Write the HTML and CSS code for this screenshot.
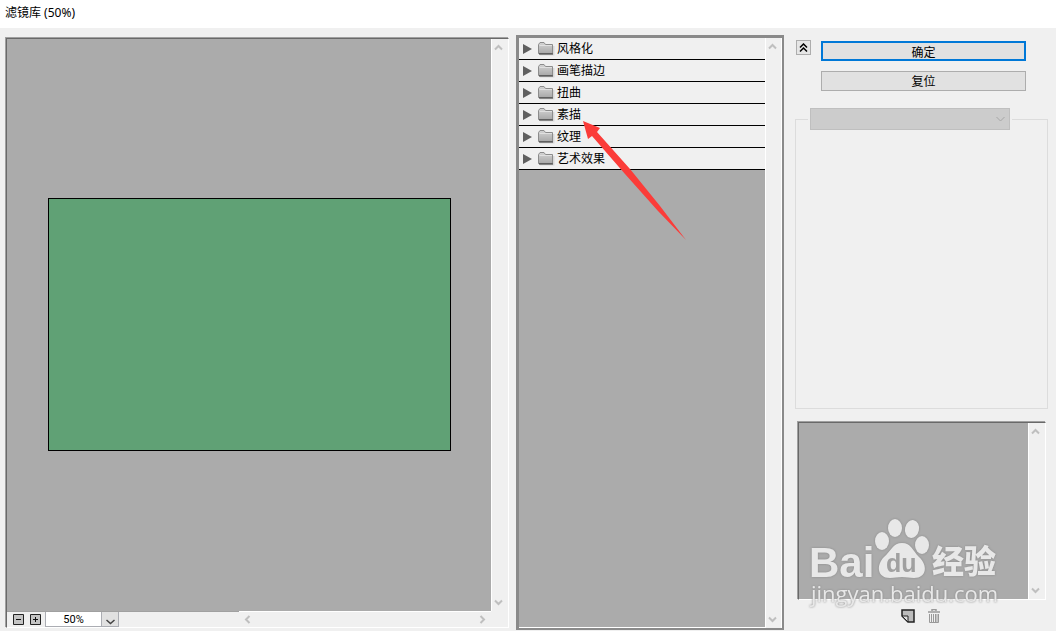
FILE: index.html
```html
<!doctype html>
<html lang="zh-CN">
 <head>
  <meta charset="utf-8">
  <title>滤镜库 (50%)</title>
  <link rel="stylesheet" href="styles.css">
 </head>

 <body>
  <!-- shared scroll arrows and folder -->
  <svg class="defs">
	<symbol id="up" viewBox="0 0 9 7"><path d="M1 5.5 4.5 2 8 5.5" fill="none" stroke="#bfbfbf" stroke-width="2"/></symbol>
	<symbol id="down" viewBox="0 0 9 7"><path d="M1 1.5 4.5 5 8 1.5" fill="none" stroke="#bfbfbf" stroke-width="2"/></symbol>
	<symbol id="left" viewBox="0 0 7 9"><path d="M5.5 1 2 4.5 5.5 8" fill="none" stroke="#bfbfbf" stroke-width="2"/></symbol>
	<symbol id="right" viewBox="0 0 7 9"><path d="M1.5 1 5 4.5 1.5 8" fill="none" stroke="#bfbfbf" stroke-width="2"/></symbol>
	<symbol id="folder" viewBox="0 0 17 14">
	  <path d="M2 12.5h13.5V4" fill="none" stroke="#d8d8d8" stroke-width="2"/>
	  <path d="M.5 11.5v-9l1.5-2h4l1.5 2h7v9z" fill="url(#metal)" stroke="#8c8c8c"/>
	  <path d="M1.500 3.500h12.500" stroke="#e0e0e0"/>
	  <path d="M1 12h14" stroke="#333"/>
	</symbol>
	<linearGradient id="metal" x1="0" y1="0" x2="0" y2="1"><stop offset="0" stop-color="#d4d4d4"/><stop offset="1" stop-color="#a8a8a8"/></linearGradient>
  </svg>

  <header class="title">滤镜库 (50%)</header>

  <main class="gallery">
	<section class="preview">
	  <div class="canvas"><div class="picture"></div></div>
	  <div class="vscroll"><svg class="v"><use href="#up"/></svg><svg class="v"><use href="#down"/></svg></div>
	  <div class="zoombar">
		<button class="zoom" aria-label="缩小"><svg viewBox="0 0 11 11"><path d="M.5.5h10v10H.5z" fill="#c4c4c4" stroke="#222"/><path d="M3 5.5h5" stroke="#111"/></svg></button>
		<button class="zoom" aria-label="放大"><svg viewBox="0 0 11 11"><path d="M.5.5h10v10H.5z" fill="#c4c4c4" stroke="#222"/><path d="M3 5.5h5M5.5 3v5" stroke="#111"/></svg></button>
		<input class="level" type="text" value="50%" aria-label="缩放比例">
		<button class="drop" aria-label="选择比例"><svg viewBox="0 0 9 6"><path d="M.5 1 4.5 4.5 8.5 1" fill="none" stroke="#444" stroke-width="1.5"/></svg></button>
	  </div>
	  <div class="hscroll"><svg class="h"><use href="#left"/></svg><svg class="h"><use href="#right"/></svg></div>
	</section>

	<section class="filters">
	  <div class="list">
		<button class="group"><span class="tri"></span><svg class="folder"><use href="#folder"/></svg>风格化</button>
		<button class="group"><span class="tri"></span><svg class="folder"><use href="#folder"/></svg>画笔描边</button>
		<button class="group"><span class="tri"></span><svg class="folder"><use href="#folder"/></svg>扭曲</button>
		<button class="group"><span class="tri"></span><svg class="folder"><use href="#folder"/></svg>素描</button>
		<button class="group"><span class="tri"></span><svg class="folder"><use href="#folder"/></svg>纹理</button>
		<button class="group"><span class="tri"></span><svg class="folder"><use href="#folder"/></svg>艺术效果</button>
	  </div>
	  <div class="vscroll"><svg class="v"><use href="#up"/></svg><svg class="v"><use href="#down"/></svg></div>
	  <svg class="pointer" viewBox="0 0 104 120"><path d="M0 0 17 7 14 11 47 48 77 85 103 119 75 90 42 53 9 15 5 18z" fill="#fb3c39"/></svg>
	</section>

	<section class="side">
	  <div class="actions">
		<button class="collapse" aria-label="折叠"><svg viewBox="0 0 9 9"><path d="M1 4.5 4.5 1 8 4.5M1 8.5 4.5 5 8 8.5" fill="none" stroke="#000" stroke-width="1.5"/></svg></button>
		<div class="buttons">
		  <button class="btn ok">确定</button>
		  <button class="btn">复位</button>
		</div>
	  </div>

	  <fieldset class="options">
		<legend><span class="combo"><select disabled aria-label="滤镜"></select><svg viewBox="0 0 9 6"><path d="M.5 1 4.5 5 8.5 1" fill="none" stroke="#a6a6a6"/></svg></span></legend>
	  </fieldset>

	  <div class="layers">
		<div class="stack"></div>
		<div class="vscroll"><svg class="v"><use href="#up"/></svg><svg class="v"><use href="#down"/></svg></div>
		<svg class="mark" viewBox="0 0 210 104">
		  <g fill="#e8e8e8">
			<text class="bai" x="9" y="67">Bai</text>
			<ellipse cx="82" cy="31" rx="7" ry="9"/>
			<ellipse cx="95" cy="18" rx="7" ry="9"/>
			<ellipse cx="112" cy="19" rx="7" ry="9" transform="rotate(12 112 19)"/>
			<ellipse cx="122" cy="35" rx="7" ry="9"/>
			<path d="M102 33c9 0 11 8 17 14 9 8 8 21-5 21-5 0-7-1-12-1s-7 1-12 1c-13 0-14-13-6-21 7-6 9-14 18-14z"/>
			<text class="jy" x="132" y="63">经验</text>
			<text class="url" x="11" y="92">jingyan.baidu.com</text>
		  </g>
		  <text class="du" x="86" y="62">du</text>
		</svg>
	  </div>

	  <div class="tools">
		<button class="tool" aria-label="新建效果图层"><svg width="14" height="14" viewBox="0 0 14 14"><path d="M1 1h12v12H7L1 7z" fill="#bcbcbc" stroke="#222" stroke-width="1.5"/><path d="M1 7h6v6z" fill="#e0e0e0" stroke="#222"/></svg></button>
		<button class="tool" aria-label="删除效果图层"><svg width="12" height="14" viewBox="0 0 12 14"><path d="M0 3h12M4 2V.5h4V2" fill="none" stroke="#999" stroke-width="1.5"/><path d="M1.5 5v8.5h9V5M3.5 5v8M5.5 5v8M7.5 5v8M9 5v8" fill="none" stroke="#999"/></svg></button>
	  </div>
	</section>
  </main>
 </body>
</html>
```
FILE: styles.css
```css
* { box-sizing: border-box; }
body { margin: 0; height: 100vh; display: flex; flex-direction: column; background: #f0f0f0; color: #000; font: 12px/18px "Noto Sans", "Noto Sans CJK SC", sans-serif; }
button, input, select { font: inherit; color: inherit; margin: 0; padding: 0; border: 0; border-radius: 0; background: none; }
svg { display: block; flex: none; }
.defs { width: 0; height: 0; position: absolute; }

.title { background: #fff; height: 28px; padding: 4px 5px; }
.gallery { flex: 1; min-height: 0; display: grid; grid-template-columns: minmax(0, 1fr) 268px 264px; padding: 7px 8px 1px 5px; }

/* sunken panels */
.preview, .layers { border: 1px solid; border-color: #696969 #fff #fff #696969; box-shadow: -1px -1px #a0a0a0; }
.vscroll { width: 17px; border-left: 1px solid #fff; background: #f0f0f0; display: flex; flex-direction: column; align-items: center; justify-content: space-between; padding: 5px 3px 5px 0; }
.v { width: 9px; height: 7px; }
.h { width: 7px; height: 9px; }

.preview { margin: 3px 7px 2px 1px; display: grid; grid-template-columns: 232px minmax(0, 1fr) 17px; grid-template-rows: minmax(0, 1fr) 16px; }
.canvas { grid-column: 1 / 3; background: #ababab; display: flex; align-items: center; justify-content: center; overflow: hidden; padding-bottom: 2px; }
.picture { width: 403px; height: 253px; background: #60a175; border: 1px solid #000; flex: none; }
.zoombar { grid-column: 1; border-top: 1px solid #a0a0a0; display: flex; align-items: center; padding-left: 6px; }
.zoom { width: 11px; height: 11px; margin-right: 6px; }
.level { width: 57px; height: 15px; background: #fff; border: 1px solid #abadb3; border-top: 0; text-align: center; font-family: Roboto, sans-serif; font-size: 11px; line-height: 14px; }
.zoom + .level { margin-left: -2px; }
.drop { width: 17px; height: 15px; background: #e1e1e1; border: solid #abadb3; border-width: 0 1px 1px 0; display: flex; align-items: flex-end; justify-content: center; padding-bottom: 1px; }
.drop svg { width: 9px; height: 6px; }
.hscroll { grid-column: 2; border-top: 1px solid #fff; display: flex; align-items: center; justify-content: space-between; padding: 0 5px; }

.filters { position: relative; display: flex; background: #ababab; border: 3px solid #8a8a8a; border-right-width: 2px; border-bottom-width: 2px; box-shadow: inset 0 -1px #fff; }
.filters .vscroll { border-right: 1px solid #fff; padding-right: 2px; }
.list { flex: 1; }
.group { width: 100%; height: 22px; display: flex; align-items: center; background: #f0f0f0; border-bottom: 1px solid #000; padding-left: 4px; text-align: left; }
.tri { border: 5px solid transparent; border-left: 9px solid #606060; border-right: 0; margin-right: 6px; }
.folder { width: 17px; height: 14px; margin-right: 2px; }
.pointer { position: absolute; left: 64px; top: 83px; width: 104px; height: 120px; }

.side { margin-left: 11px; display: flex; flex-direction: column; }
.actions { display: flex; align-items: flex-start; padding: 5px 22px 17px 1px; }
.collapse { width: 15px; height: 15px; border: 1px solid #adadad; background: #e6e6e6; display: flex; align-items: center; justify-content: center; margin-right: 10px; }
.collapse svg { width: 9px; height: 9px; }
.buttons { flex: 1; display: grid; gap: 10px; padding-top: 1px; }
.btn { height: 20px; background: #e1e1e1; border: 1px solid #adadad; line-height: 16px; padding-top: 2px; }
.btn.ok { border: 2px solid #0078d7; }

.options { flex: 1; min-width: 0; margin: 0; padding: 0 0 0 12px; border: 1px solid #dcdcdc; }
.options legend { padding: 0 2px; }
.combo { display: flex; align-items: center; width: 200px; }
.combo select { appearance: none; width: 200px; height: 22px; background: #ccc; border: 1px solid #bfbfbf; opacity: 1; }
.combo svg { width: 9px; height: 6px; margin-left: -14px; }

.layers { position: relative; margin: 13px 2px 0 3px; height: 178px; display: flex; }
.stack { flex: 1; background: #ababab; }
/* watermark hangs over the lower edge of the layer list */
.mark { position: absolute; left: 1px; top: 87px; width: 210px; height: 104px; filter: drop-shadow(0 0 1px #888); }
.bai { font: bold 42px "Liberation Sans", sans-serif; }
.du { font: bold 25px "Liberation Sans", sans-serif; fill: #a0a0a0; }
.jy { font: 900 32px "Noto Sans CJK SC", sans-serif; }
.url { font: 22px "Open Sans", sans-serif; }
.tools { display: flex; align-items: center; justify-content: center; gap: 13px; height: 30px; padding: 2px 3px 0 0; }
```
